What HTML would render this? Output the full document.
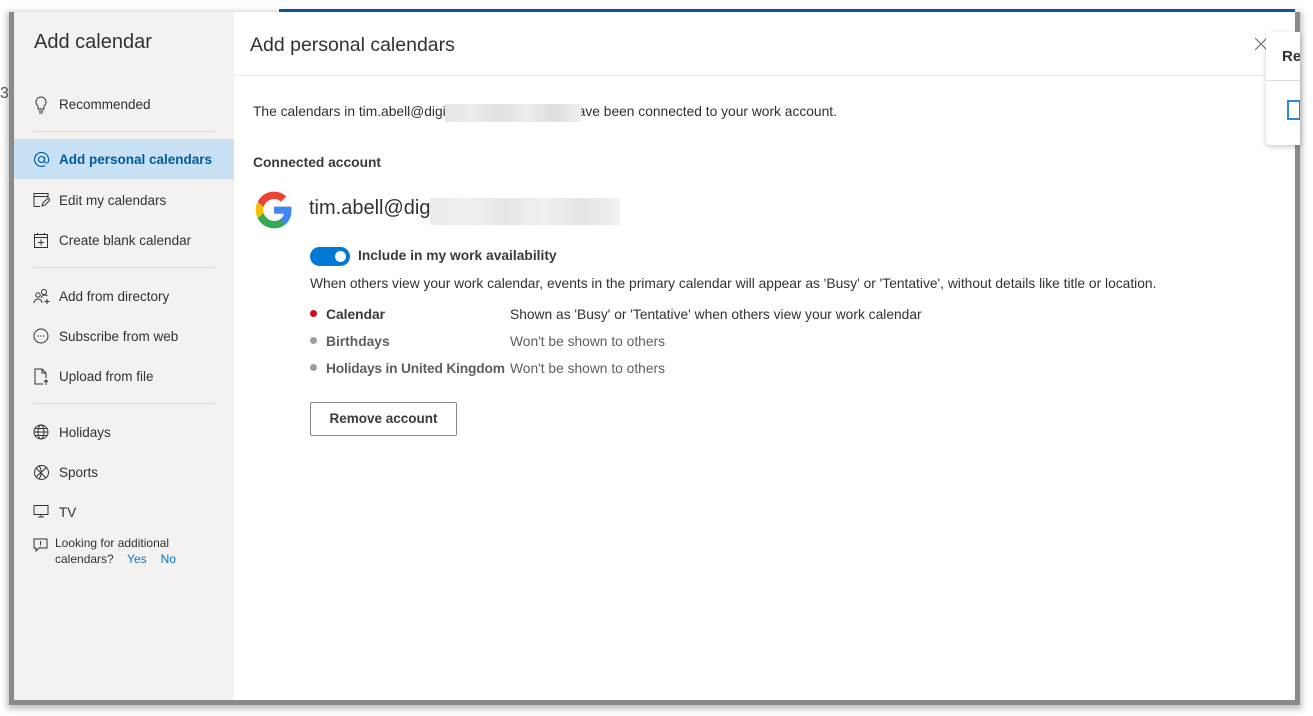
<!DOCTYPE html>
<html><head><meta charset="utf-8"><style>
*{box-sizing:border-box;margin:0;padding:0}
body{width:1313px;height:716px;background:#fff;font-family:"Segoe UI","Liberation Sans",sans-serif;position:relative;overflow:hidden;color:#323130}
.bg{position:absolute;left:9px;top:12px;width:1291px;height:693px;background:#8a8a8a;box-shadow:0 2px 6px 2px rgba(0,0,0,.25)}
.topblue{position:absolute;left:279px;top:9px;width:1016px;height:3px;background:#0f5496}
.dlg{position:absolute;left:14px;top:12px;width:1281px;height:688px;background:#fff}
.left{position:absolute;left:0;top:0;width:220px;height:688px;background:#f3f2f1}
.left h1{position:absolute;left:20px;top:19px;font-size:20px;font-weight:400;color:#323130}
.item{position:absolute;left:0;width:220px;height:40px;font-size:13.5px;color:#323130;display:flex;align-items:center;padding-left:45px}
.item svg{position:absolute;left:19px;top:12px}
.sel{background:#c7e0f4;color:#005a9e;font-weight:600}
.sep{position:absolute;left:20px;width:180px;height:1px;background:#dcdad8}
.main{position:absolute;left:220px;top:0;right:0;height:688px}
.hdr{height:64px;border-bottom:1px solid #edebe9;font-size:19.5px;padding:22px 0 0 16px}
.t{position:absolute;font-size:13.8px;white-space:nowrap}
.b{font-weight:600;color:#3b3a39}
.blur{position:absolute;background:linear-gradient(90deg,#e6e6e6,#ececec 20%,#e0e0e0 40%,#ededed 60%,#dddddd 80%,#f0f0f0)}
</style></head><body>
<div class="bg"></div>
<div class="topblue"></div>
<div style="position:absolute;left:0;top:85px;width:9px;height:20px;font-size:16px;color:#555">3</div>
<div class="dlg">
 <div class="left">
  <h1>Add calendar</h1>
  <div class="item" style="top:72px"><svg width="16" height="18" viewBox="0 0 16 18" fill="none" stroke="#323130" stroke-width="1"><path d="M8 1a5 5 0 0 0-3 9v3h6v-3a5 5 0 0 0-3-9zM5.5 15h5M6 17h4"/></svg>Recommended</div>
  <div class="sep" style="top:119px"></div>
  <div class="item sel" style="top:127px"><svg width="17" height="17" viewBox="0 0 17 17" fill="none" stroke="#005a9e" stroke-width="1.1"><circle cx="8.5" cy="8.5" r="3"/><path d="M11.5 6v4a2 2 0 0 0 4 0V8.5A7 7 0 1 0 12 14.5"/></svg>Add personal calendars</div>
  <div class="item" style="top:168px"><svg width="17" height="16" viewBox="0 0 17 16" fill="none" stroke="#323130"><path d="M1 14.5V1.5h14v4M1 4.5h14M1 14.5h6M9 14l1-3 5-5 2 2-5 5z"/></svg>Edit my calendars</div>
  <div class="item" style="top:208px"><svg width="16" height="16" viewBox="0 0 16 16" fill="none" stroke="#323130"><path d="M1.5 2.5h13v13h-13zM1.5 5.5h13M8 7.5v6M5 10.5h6M4.5 1v2M11.5 1v2"/></svg>Create blank calendar</div>
  <div class="sep" style="top:255px"></div>
  <div class="item" style="top:264px"><svg width="18" height="16" viewBox="0 0 18 16" fill="none" stroke="#323130"><circle cx="11" cy="4" r="2.5"/><circle cx="5" cy="7" r="2.2"/><path d="M1 15a4 4 0 0 1 8 0M8 10a4 4 0 0 1 6.5-2M14 11v5M11.5 13.5h5"/></svg>Add from directory</div>
  <div class="item" style="top:304px"><svg width="16" height="16" viewBox="0 0 16 16" fill="none" stroke="#323130"><circle cx="8" cy="8" r="7"/><path d="M4.5 8h1.5M7.3 8h1.5M10 8h1.5"/></svg>Subscribe from web</div>
  <div class="item" style="top:344px"><svg width="16" height="17" viewBox="0 0 16 17" fill="none" stroke="#323130"><path d="M10 16H2V1h7l4 4v5M9 1v4h4M13 12v5M11 14l2-2 2 2"/></svg>Upload from file</div>
  <div class="sep" style="top:391px"></div>
  <div class="item" style="top:400px"><svg width="16" height="16" viewBox="0 0 16 16" fill="none" stroke="#323130"><circle cx="8" cy="8" r="7"/><ellipse cx="8" cy="8" rx="3" ry="7"/><path d="M1 8h14M2 4.5h12M2 11.5h12"/></svg>Holidays</div>
  <div class="item" style="top:440px"><svg width="17" height="17" viewBox="0 0 17 17" fill="none" stroke="#323130"><circle cx="8.5" cy="8.5" r="7"/><path d="M3 4l10 10M14 3L3 13M6 2c3 3 3 9 0 13"/></svg>Sports</div>
  <div class="item" style="top:480px"><svg width="16" height="14" viewBox="0 0 16 14" fill="none" stroke="#323130"><path d="M1 1.5h14v9H1zM8 10.5v2M5 13h6"/></svg>TV</div>
  <svg style="position:absolute;left:19px;top:526px" width="15" height="14" viewBox="0 0 15 14" fill="none" stroke="#323130"><path d="M1 1h13v9H6l-3 3v-3H1zM7.5 3v4M7.5 8.5v.5"/></svg>
  <div style="position:absolute;left:41px;top:523px;font-size:12px;line-height:16px;color:#323130">Looking for additional<br>calendars? <span style="color:#0078d4;margin-left:10px">Yes</span><span style="color:#0078d4;margin-left:14px">No</span></div>
 </div>
 <div class="main">
  <div class="hdr">Add personal calendars</div>
  <svg style="position:absolute;left:1021px;top:26px" width="12" height="12" viewBox="0 0 12 12" stroke="#666" stroke-width="1"><path d="M0 0l12 12M12 0L0 12"/></svg>
  <div class="t" style="left:19px;top:92px">The calendars in tim.abell@digi<span style="display:inline-block;width:132px"></span>ave been connected to your work account.</div>
  <div class="blur" style="left:211px;top:92px;width:136px;height:18px"></div>
  <div class="t b" style="left:19px;top:143px">Connected account</div>
  <svg style="position:absolute;left:20px;top:178px" width="40" height="40" viewBox="0 0 48 48"><path fill="#4285F4" d="M45 24.5c0-1.6-.1-3.1-.4-4.5H24v8.5h11.8c-.5 2.7-2 5-4.4 6.6v5.5h7.1c4.2-3.8 6.5-9.5 6.5-16.1z"/><path fill="#34A853" d="M24 46c5.9 0 10.9-2 14.5-5.4l-7.1-5.5c-2 1.3-4.5 2.1-7.400 2.1-5.7 0-10.6-3.9-12.3-9.1H4.4v5.7C8 41.1 15.4 46 24 46z"/><path fill="#FBBC05" d="M11.7 28.1c-.4-1.3-.7-2.7-.7-4.1s.3-2.8.7-4.1v-5.7H4.4C2.9 17.2 2 20.5 2 24s.9 6.8 2.4 9.8l7.3-5.7z"/><path fill="#EA4335" d="M24 10.8c3.2 0 6.1 1.1 8.4 3.3l6.3-6.3C34.9 4.2 29.9 2 24 2 15.4 2 8 6.9 4.4 14.2l7.3 5.7c1.7-5.2 6.6-9.1 12.3-9.1z"/></svg>
  <div class="t" style="left:75px;top:185px;font-size:20px">tim.abell@dig</div>
  <div class="blur" style="left:196px;top:186px;width:190px;height:27px;opacity:.8"></div>
  <div style="position:absolute;left:76px;top:235px;width:40px;height:19px;border-radius:10px;background:#0078d4"><div style="position:absolute;right:4px;top:4px;width:11px;height:11px;border-radius:50%;background:#fff"></div></div>
  <div class="t b" style="left:124px;top:236px">Include in my work availability</div>
  <div class="t" style="left:76px;top:264px">When others view your work calendar, events in the primary calendar will appear as 'Busy' or 'Tentative', without details like title or location.</div>
  <div style="position:absolute;left:76px;top:298px;width:7px;height:7px;border-radius:50%;background:#c50f1f"></div>
  <div class="t b" style="left:92px;top:295px">Calendar</div>
  <div class="t" style="left:276px;top:295px">Shown as 'Busy' or 'Tentative' when others view your work calendar</div>
  <div style="position:absolute;left:76px;top:325px;width:7px;height:7px;border-radius:50%;background:#a19f9d"></div>
  <div class="t b" style="left:92px;top:322px;color:#605e5c">Birthdays</div>
  <div class="t" style="left:276px;top:322px;color:#605e5c">Won't be shown to others</div>
  <div style="position:absolute;left:76px;top:352px;width:7px;height:7px;border-radius:50%;background:#a19f9d"></div>
  <div class="t b" style="left:92px;top:349px;color:#605e5c;letter-spacing:-.2px">Holidays in United Kingdom</div>
  <div class="t" style="left:276px;top:349px;color:#605e5c">Won't be shown to others</div>
  <div style="position:absolute;left:76px;top:390px;width:147px;height:34px;border:1px solid #8a8886;border-radius:2px;font-size:13.5px;font-weight:600;text-align:center;line-height:32px;color:#3b3a39">Remove account</div>
 </div>
</div>
<div style="position:absolute;left:1266px;top:32px;width:34px;height:113px;background:#fff;border-radius:4px 0 0 4px;box-shadow:0 2px 6px rgba(0,0,0,.2);overflow:hidden">
 <div style="position:absolute;left:16px;top:16px;font-size:15px;font-weight:600;color:#323130">Re</div>
 <div style="position:absolute;left:0;top:48px;width:34px;height:1px;background:#e1dfdd"></div>
 <div style="position:absolute;left:21px;top:68px;width:14px;height:20px;border:2px solid #2b88d8"></div>
</div>
</body></html>
